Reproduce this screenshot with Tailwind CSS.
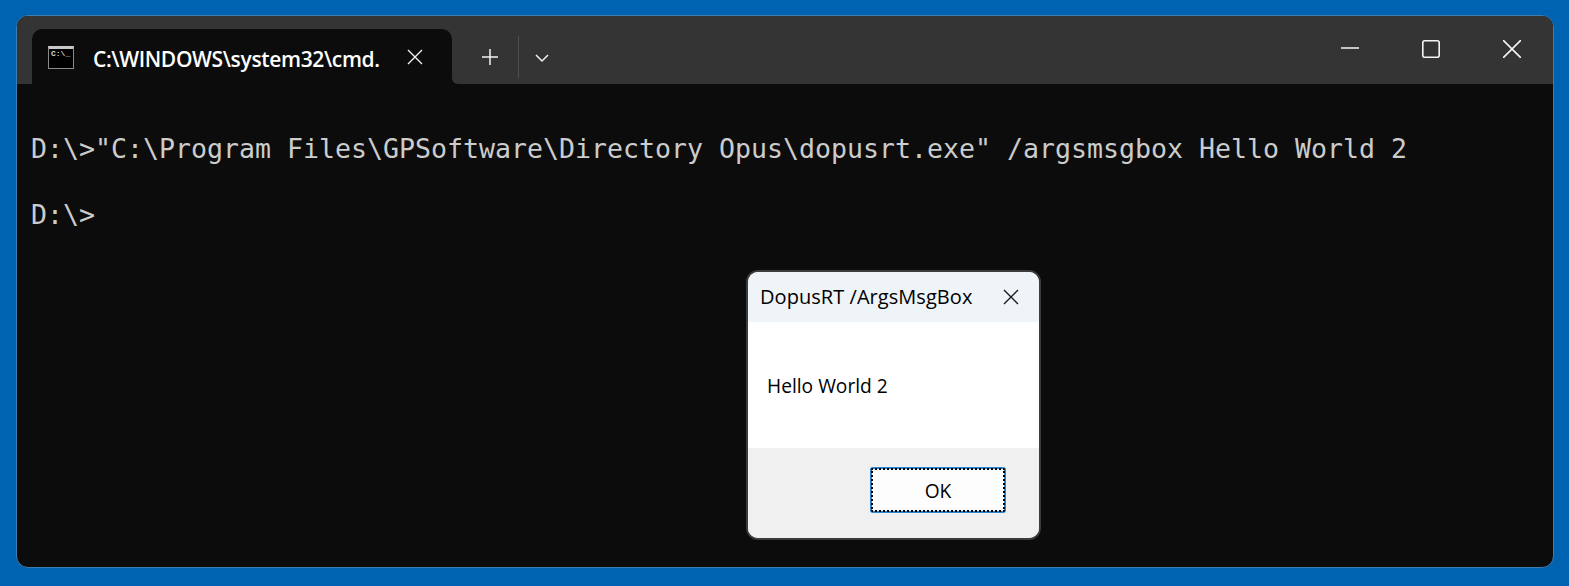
<!DOCTYPE html>
<html lang="en">
<head>
  <meta charset="UTF-8" />
  <title>Command Prompt</title>
  <script src="https://cdn.jsdelivr.net/npm/@tailwindcss/browser@4"></script>
</head>

<body class="h-[586px] overflow-hidden bg-[#0063b1] pt-[15px] pl-[16px] font-['Open_Sans',sans-serif]">
  <!-- terminal window -->
  <div class="relative h-[553px] w-[1538px] overflow-hidden rounded-[12px] border border-[#3f7cb0] bg-[#0c0c0c]">

    <!-- tab bar -->
    <div class="flex h-[68px] bg-[#343434] pt-[13px] pl-[15px]">
      <div class="relative flex h-[55px] w-[420px] items-start rounded-t-[10px] bg-[#0c0c0c]">
        <!-- cmd icon -->
        <div class="mt-[17px] ml-[16px] h-[23px] w-[26px] border border-[#8a8a8a] border-t-[3px] border-t-[#c8c8c8] bg-black pl-[2px] font-['Liberation_Mono',monospace] text-[8px] leading-[10px] font-bold text-[#d8d8d8]">C:\_</div>
        <div class="mt-[16px] ml-[19px] w-[288px] overflow-hidden text-[21px] leading-[28px] font-semibold tracking-[-0.35px] whitespace-nowrap text-white">C:\WINDOWS\system32\cmd.</div>
        <svg class="mt-[20px] ml-[26px]" width="16" height="16" viewBox="0 0 16 16" fill="none" stroke="#f2f2f2" stroke-width="1.4"><path d="M1 1l14 14M15 1L1 15" /></svg>
        <!-- flared bottom corners -->
        <div class="absolute right-[-6px] bottom-0 h-[6px] w-[6px] bg-[#0c0c0c]"><div class="h-full w-full rounded-bl-[6px] bg-[#343434]"></div></div>
      </div>
      <div class="ml-[29px] flex items-start">
        <svg class="mt-[19px]" width="18" height="18" viewBox="0 0 18 18" fill="none" stroke="#f2f2f2" stroke-width="1.5"><path d="M9 1v16M1 9h16" /></svg>
        <div class="mt-[7px] ml-[19px] h-[42px] w-px bg-[#4e4e4e]"></div>
        <svg class="mt-[25px] ml-[16px]" width="14" height="9" viewBox="0 0 14 9" fill="none" stroke="#f2f2f2" stroke-width="1.5"><path d="M1 1l6 6 6-6" /></svg>
      </div>
      <div class="ml-auto flex items-start pr-[32px]">
        <svg class="mt-[11px]" width="18" height="18" viewBox="0 0 18 18" fill="none" stroke="#f5f5f5" stroke-width="1.5"><path d="M0 8h18" /></svg>
        <svg class="mt-[11px] ml-[63px]" width="18" height="18" viewBox="0 0 18 18" fill="none" stroke="#f5f5f5" stroke-width="1.6"><rect x="0.8" y="0.8" width="16.4" height="16.4" rx="2" /></svg>
        <svg class="mt-[11px] ml-[63px]" width="18" height="18" viewBox="0 0 18 18" fill="none" stroke="#f5f5f5" stroke-width="1.6"><path d="M0 0l18 18M18 0L0 18" /></svg>
      </div>
    </div>

    <!-- terminal output -->
    <div class="pt-[15px] pl-[14px] font-['DejaVu_Sans_Mono',monospace] text-[26.58px] leading-[33px] whitespace-nowrap text-[#cccccc]">
      <div>&nbsp;</div>
      <div>D:\&gt;"C:\Program Files\GPSoftware\Directory Opus\dopusrt.exe" /argsmsgbox Hello World 2</div>
      <div>&nbsp;</div>
      <div>D:\&gt;</div>
    </div>

    <!-- message box -->
    <div class="absolute top-[254px] left-[729px] flex h-[270px] w-[295px] flex-col overflow-hidden rounded-[12px] border-2 border-[#3c3c3c] bg-white text-black">
      <div class="flex h-[50px] shrink-0 items-center bg-[#eff4f9] pl-[12px]">
        <span class="text-[20px] leading-[28px] tracking-[0.05px]">DopusRT /ArgsMsgBox</span>
        <svg class="ml-auto mr-[20px]" width="16" height="16" viewBox="0 0 16 16" fill="none" stroke="#1a1a1a" stroke-width="1.4"><path d="M1 1l14 14M15 1L1 15" /></svg>
      </div>
      <div class="flex h-[126px] shrink-0 items-center pt-[3px] pl-[19px] text-[19.2px]">Hello World 2</div>
      <div class="flex flex-1 items-start justify-end bg-[#f0f0f0] pt-[19px] pr-[33px]">
        <button class="h-[46px] w-[136px] rounded-[3px] border-2 border-[#2a86d0] bg-[#fdfdfd] pt-[2px] text-[19.2px] outline-2 -outline-offset-3 outline-dotted outline-black">OK</button>
      </div>
    </div>
  </div>
</body>
</html>
